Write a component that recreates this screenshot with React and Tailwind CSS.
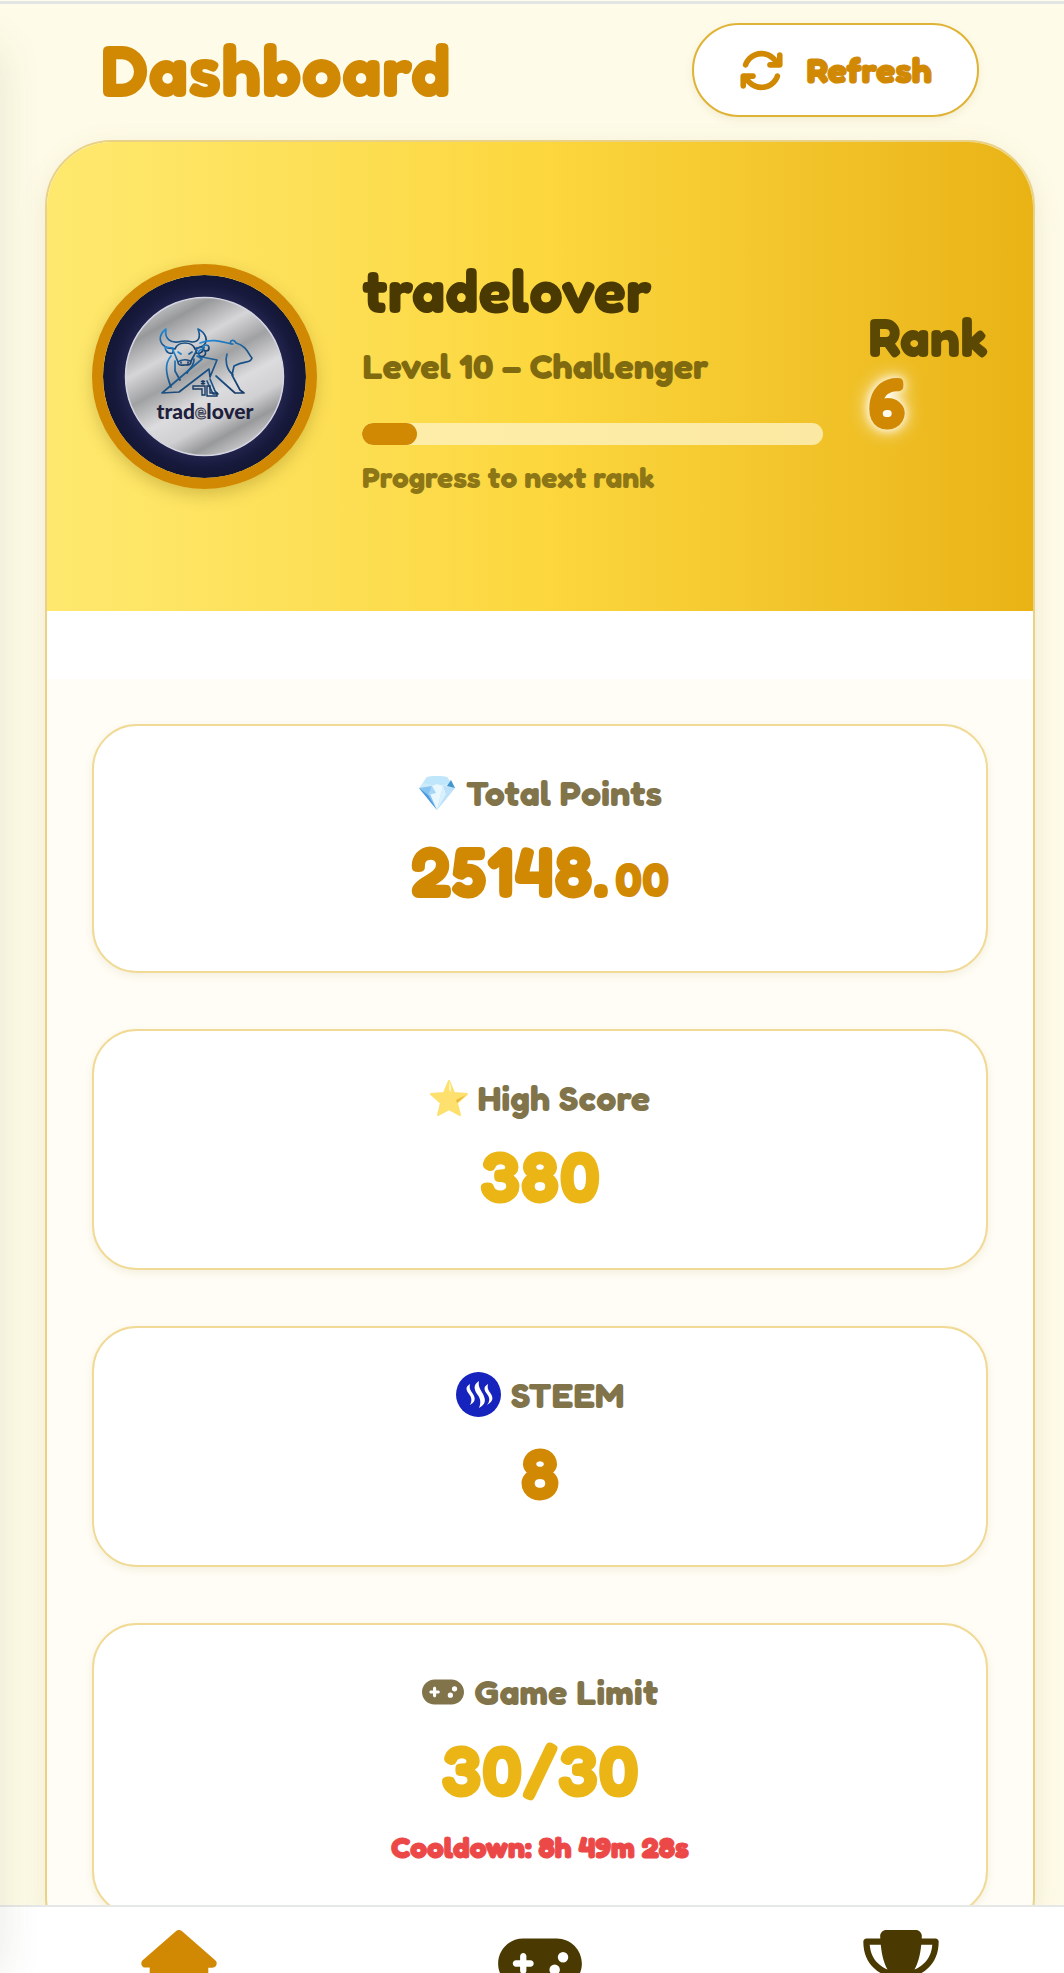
import React from "react";
import { FaArrowsRotate, FaGamepad, FaHouse, FaTrophy } from "react-icons/fa6";

function Avatar() {
  return (
    <svg viewBox="0 0 203 203" className="block size-full" role="img" aria-label="tradelover avatar">
      <defs>
        <radialGradient id="navy" cx="50%" cy="50%" r="50%">
          <stop offset="0.76" stopColor="#24264f" />
          <stop offset="0.88" stopColor="#181a3e" />
          <stop offset="1" stopColor="#141634" />
        </radialGradient>
        <linearGradient id="steel" x1="0.25" y1="0.05" x2="0.75" y2="0.95">
          <stop offset="0" stopColor="#bcbdbf" />
          <stop offset="0.1" stopColor="#97989a" />
          <stop offset="0.28" stopColor="#d6d6d8" />
          <stop offset="0.44" stopColor="#a0a1a3" />
          <stop offset="0.62" stopColor="#dcdcde" />
          <stop offset="0.76" stopColor="#d0d0d2" />
          <stop offset="0.88" stopColor="#98999b" />
          <stop offset="1" stopColor="#c8c8ca" />
        </linearGradient>
        <linearGradient id="ink" x1="0" y1="0" x2="0.7" y2="1">
          <stop offset="0" stopColor="#1f8fe0" />
          <stop offset="0.5" stopColor="#1c5c94" />
          <stop offset="1" stopColor="#173a66" />
        </linearGradient>
      </defs>
      <circle cx="101.500" cy="101.500" r="101.500" fill="url(#navy)" />
      <circle cx="101.500" cy="101.500" r="79" fill="url(#steel)" stroke="#d5d5e2" strokeWidth="1.500" />
      <g fill="none" stroke="url(#ink)" strokeWidth="1.700" strokeLinejoin="round" strokeLinecap="round">
        <path d="M63 54C55 60 55 69 65 73L72 74C75 66 89 66 92 74L100 71C106 66 103 58 95 54C98 62 96 67 89 67C82 65 79 66 75 67C68 68 61 64 63 54Z" />
        <path d="M70 73L62 72C63 78 67 79 70 78ZM93 73L101 72C100 78 96 79 93 78Z" />
        <path d="M70 75L75 87C75 91 78 90 82 90C86 90 88 90 88 86L94 75M75 87C78 84 86 84 88 87" />
        <path d="M75 77L78 79M89 77L86 79M78 87V88M85 87V88" />
        <path d="M68 81C62 88 62 97 68 112M72 86V96L77 105M91 84C91 92 87 92 84 98" />
        <path d="M59 118L99 84L94 81L114 85L107 102L106 94L76 117Z" />
        <path d="M97 68C112 62 124 69 130 69H128C126 65 131 64 133 68C144 71 145 79 149 83C147 89 142 85 131 91L129 100L137 115L141 118H132L113 101M124 79C122 85 123 94 130 100M107 104L112 116L115 119H110L104 106" />
        <circle cx="99" cy="78" r="3.500" />
        <circle cx="103" cy="73" r="3" />
      </g>
      <g fill="none" stroke="#173a66" strokeWidth="1.400">
        <path d="M90 111H102V120H99V114H90ZM104 111H107V118H114V121H104ZM98 106L102 109M102 106L98 109M100 105V110" />
      </g>
      <text x="102" y="144" textAnchor="middle" fontFamily="Lato, sans-serif" fontWeight="900" fontSize="21" fill="#20203c">
        trad
        <tspan fill="#b9babd" stroke="#20203c" strokeWidth="0.800">e</tspan>
        lover
      </text>
    </svg>
  );
}

function Diamond() {
  return (
    <svg viewBox="0 0 38 34" className="h-[34px] w-[38px] shrink-0" aria-hidden="true">
      <path d="M9 1Q19-1 29 1L37 12 19 34 1 12Z" fill="#cdeaf9" />
      <path d="M9 1Q19-1 29 1l4 6-14 3L5 7Z" fill="#bfe6fa" />
      <path d="M1 12L14 10l5 24Z" fill="#86c3f0" />
      <path d="M1 12l9 7 9 15Z" fill="#4d97dc" />
      <path d="M14 10l5-2 6 2-6 24-7-16Z" fill="#e9f7fe" />
      <path d="M25 10l12 2-18 22Z" fill="#bde1f8" />
      <path d="M25 10l3 8-9 16Z" fill="#d9f1fc" />
      <path d="M29 10l4-6 4 8Z" fill="#4496cf" />
      <path d="M10 19l4-9 4 7Z" fill="#a5d6f7" />
    </svg>
  );
}

function Star() {
  return (
    <svg viewBox="0 0 38 38" className="size-[38px] shrink-0" aria-hidden="true">
      <path
        d="M19 2l5 12 13 1-10 9 3 12-11-6-11 6 3-12L1 15l13-1Z"
        fill="#fee06e"
        stroke="#fee06e"
        strokeWidth="2"
        strokeLinejoin="round"
      />
      <path d="M26 21l10-5-8 7-1 1Z" fill="#eab93d" />
      <path d="M19 3l2 4v6l-2-2Z" fill="#fff6ba" />
    </svg>
  );
}

function Steem() {
  return (
    <svg viewBox="0 0 45 45" className="size-[45px] shrink-0" aria-hidden="true">
      <circle cx="22.500" cy="22.500" r="22.500" fill="#1723bd" />
      <g fill="#fff">
        <path d="M14 12C9 15 10 18 13 22C16 26 16 29 14 33C19 30 20 27 17 22C14 18 13 16 14 12Z" />
        <path d="M23 9C17 13 18 17 21 22C25 27 25 31 23 36C30 32 30 28 27 22C24 17 22 14 23 9Z" />
        <path d="M32 12C27 15 28 18 31 22C34 26 34 29 31 33C36 30 38 27 35 22C32 18 31 16 32 12Z" />
      </g>
    </svg>
  );
}

function StatCard({ icon, label, value, small, tone, note }) {
  return (
    <section className="flex flex-col items-center rounded-[45px] border-2 border-[#f1da96] bg-white px-6 pt-[44px] pb-[45px] shadow-[0_3px_8px_rgba(120,90,0,0.09)]">
      <h3 className="flex h-[45px] items-center gap-[10px] text-[36px] leading-[45px] font-bold text-[#81744b]">
        {icon}
        {label}
      </h3>
      <p className={"mt-[9px] text-[72px] leading-[94px] font-bold " + tone}>
        {value}
        {small && <span className="ml-1.5 text-[48px]">{small}</span>}
      </p>
      {note && (
        <p className="mt-[8px] text-[30px] leading-[44px] font-bold text-[#ec4848] [-webkit-text-stroke:1px_#ec4848]">{note}</p>
      )}
    </section>
  );
}

export default function App() {
  return (
    <div className="relative flex h-screen flex-col overflow-hidden bg-[#fefbe8] font-['Fredoka','Lato',sans-serif]">
      <div className="mt-px h-[3px] shrink-0 bg-[#e2e5e5]" />
      <main className="min-h-0 flex-1 overflow-hidden">
        <header className="flex items-center justify-between pt-[19px] pr-[85px] pb-[23px] pl-[101px]">
          <h1 className="text-[72px] leading-[94px] font-bold text-[#d18904]">Dashboard</h1>
          <button
            type="button"
            className="flex h-[94px] items-center gap-[23px] rounded-full border-2 border-[#dfb335] bg-white px-[45px] text-[36px] font-bold text-[#d18904] shadow-[0_3px_8px_rgba(120,90,0,0.09)]"
          >
            <FaArrowsRotate className="size-[45px]" />
            <span className="[-webkit-text-stroke:1px_#d18904]">Refresh</span>
          </button>
        </header>

        <div className="mr-[29px] ml-[45px] overflow-hidden rounded-[67px] border-2 border-[#e9d285] bg-[#fffdf5] shadow-[0_8px_28px_rgba(120,110,40,0.12)]">
          <section className="flex h-[469px] items-center gap-[45px] bg-linear-to-r from-[#fee96e] via-[#fcd73d] to-[#e9b314] px-[45px]">
            <div className="size-[225px] shrink-0 overflow-hidden rounded-full border-[11px] border-[#d18904] shadow-[0_6px_16px_rgba(100,80,0,0.25)]">
              <Avatar />
            </div>
            <div className="min-w-0 flex-1 pb-[4px]">
              <h2 className="text-[60px] leading-[78px] font-bold text-[#4a3900]">tradelover</h2>
              <p className="mt-[12px] text-[36px] leading-[50px] font-bold text-[#806a0f]">Level 10 – Challenger</p>
              <div
                role="progressbar"
                aria-label="Progress to next rank"
                aria-valuenow={12}
                className="mt-[32px] h-[22px] overflow-hidden rounded-full bg-[#fdf0b9]/85"
              >
                <div className="h-full w-[12%] rounded-full bg-[#d18904]" />
              </div>
              <p className="mt-[10px] text-[30px] leading-[44px] font-bold text-[#8d7615]">Progress to next rank</p>
            </div>
            <div className="shrink-0 pb-[13px]">
              <p className="text-[54px] leading-[63px] font-bold text-[#5b4802]">Rank</p>
              <p className="text-[72px] leading-[65px] font-bold text-[#d18904] [text-shadow:0_0_10px_#fff,0_0_20px_#fff]">6</p>
            </div>
          </section>
          <div className="h-[68px] bg-white" />
          <div className="flex flex-col gap-[56px] p-[45px]">
            <StatCard icon={<Diamond />} label="Total Points" value="25148." small="00" tone="text-[#d18904]" />
            <StatCard icon={<Star />} label="High Score" value="380" tone="text-[#eab515]" />
            <StatCard icon={<Steem />} label="STEEM" value="8" tone="text-[#d18904]" />
            <StatCard
              icon={<FaGamepad className="h-[34px] w-[42px]" />}
              label="Game Limit"
              value="30/30"
              tone="text-[#eab515]"
              note="Cooldown: 8h 49m 28s"
            />
          </div>
        </div>
      </main>

      <nav className="h-[68px] shrink-0 overflow-hidden border-t-2 border-[#e5e8e6] bg-white">
        <div className="-mr-[18px] -ml-0.5 grid grid-cols-3 justify-items-center pt-[23px] text-[#4a3900]">
          <a href="#home" aria-label="Home" className="text-[#d18904]">
            <FaHouse className="h-[67px] w-[76px]" />
          </a>
          <a href="#games" aria-label="Games">
            <FaGamepad className="h-[67px] w-[84px]" />
          </a>
          <a href="#leaderboard" aria-label="Leaderboard">
            <FaTrophy className="h-[67px] w-[76px]" />
          </a>
        </div>
      </nav>
      <div className="pointer-events-none absolute top-12 bottom-0 -left-20 w-20 shadow-[0_0_44px_rgba(70,70,40,0.12)]" />
    </div>
  );
}
